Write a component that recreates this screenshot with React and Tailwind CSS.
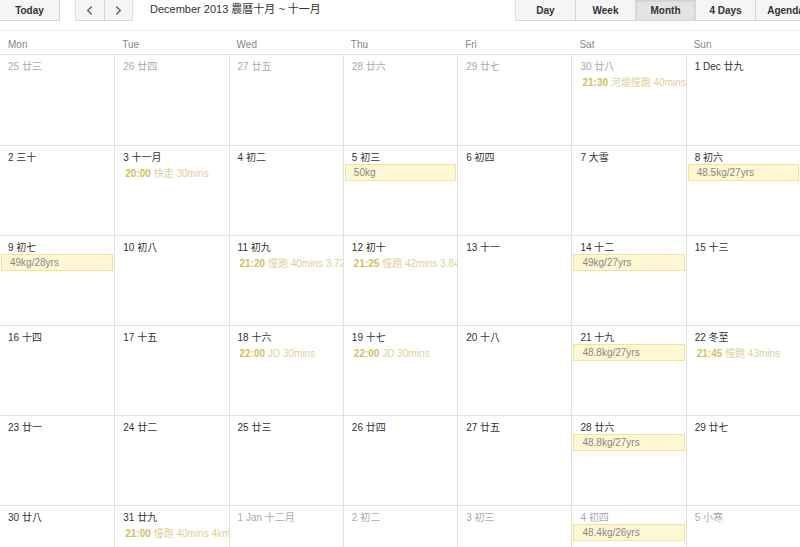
import { ChevronLeft, ChevronRight } from 'lucide-react';

const FONT = { fontFamily: '"Liberation Sans", Arial, "Noto Sans CJK TC", sans-serif' };

const DAYS = ['Mon', 'Tue', 'Wed', 'Thu', 'Fri', 'Sat', 'Sun'];

// o = other month, ev = timed event, box = all-day note
const WEEKS = [
  [
    { d: '25 廿三', o: true },
    { d: '26 廿四', o: true },
    { d: '27 廿五', o: true },
    { d: '28 廿六', o: true },
    { d: '29 廿七', o: true },
    { d: '30 廿八', o: true, ev: ['21:30', '河堤慢跑 40mins'] },
    { d: '1 Dec 廿九' },
  ],
  [
    { d: '2 三十' },
    { d: '3 十一月', ev: ['20:00', '快走 30mins'] },
    { d: '4 初二' },
    { d: '5 初三', box: '50kg' },
    { d: '6 初四' },
    { d: '7 大雪' },
    { d: '8 初六', box: '48.5kg/27yrs' },
  ],
  [
    { d: '9 初七', box: '49kg/28yrs' },
    { d: '10 初八' },
    { d: '11 初九', ev: ['21:20', '慢跑 40mins 3.72km'] },
    { d: '12 初十', ev: ['21:25', '慢跑 42mins 3.84km'] },
    { d: '13 十一' },
    { d: '14 十二', box: '49kg/27yrs' },
    { d: '15 十三' },
  ],
  [
    { d: '16 十四' },
    { d: '17 十五' },
    { d: '18 十六', ev: ['22:00', 'JD 30mins'] },
    { d: '19 十七', ev: ['22:00', 'JD 30mins'] },
    { d: '20 十八' },
    { d: '21 十九', box: '48.8kg/27yrs' },
    { d: '22 冬至', ev: ['21:45', '慢跑 43mins'] },
  ],
  [
    { d: '23 廿一' },
    { d: '24 廿二' },
    { d: '25 廿三' },
    { d: '26 廿四' },
    { d: '27 廿五' },
    { d: '28 廿六', box: '48.8kg/27yrs' },
    { d: '29 廿七' },
  ],
  [
    { d: '30 廿八' },
    { d: '31 廿九', ev: ['21:00', '慢跑 40mins 4km'] },
    { d: '1 Jan 十二月', o: true },
    { d: '2 初二', o: true },
    { d: '3 初三', o: true },
    { d: '4 初四', o: true, box: '48.4kg/26yrs' },
    { d: '5 小寒', o: true },
  ],
];

const VIEWS = ['Day', 'Week', 'Month', '4 Days', 'Agenda'];

function Btn({ children, active, className = '' }) {
  return (
    <div
      className={`flex h-[21px] items-center justify-center border-b border-[#d6d6d6] text-[10px] font-bold text-[#333] ${
        active ? 'bg-[#e4e4e4] shadow-[inset_0_1px_3px_rgba(0,0,0,0.12)]' : 'bg-[#f5f5f5]'
      } ${className}`}
    >
      {children}
    </div>
  );
}

function Cell({ day, col }) {
  return (
    <div className={`min-w-0 overflow-hidden ${col > 0 ? 'border-l border-[#e2e2e2]' : ''}`}>
      <div className={`h-[18px] pl-2 pt-[6px] text-[10px] leading-[12px] ${day.o ? 'text-[#aaa]' : 'text-[#333]'}`}>
        {day.d}
      </div>
      {day.ev && (
        <div className="h-[18px] whitespace-nowrap pl-[10px] text-[10px] leading-[20px] text-[#dccf95]">
          <span className="font-bold text-[#d3c063]">{day.ev[0]}</span> {day.ev[1]}
        </div>
      )}
      {day.box && (
        <div className="mx-px h-[17px] whitespace-nowrap border border-[#f3e29a] bg-[#fff6d3] pl-[8px] text-[10px] leading-[15px] text-[#888]">
          {day.box}
        </div>
      )}
    </div>
  );
}

export default function App() {
  return (
    <div className="h-[547px] w-[800px] overflow-hidden bg-white" style={FONT}>
      <div className="flex h-[21px] items-center">
        <Btn className="w-[60px] shrink-0 border-r">Today</Btn>
        <div className="ml-[15px] flex w-[58px] shrink-0 border-x border-[#e0e0e0]">
          <Btn className="w-[29px] border-r">
            <ChevronLeft size={15} strokeWidth={1.8} className="text-[#555]" />
          </Btn>
          <Btn className="w-[28px]">
            <ChevronRight size={15} strokeWidth={1.8} className="text-[#555]" />
          </Btn>
        </div>
        <div className="ml-[17px] w-[365px] shrink-0 pb-[3px] text-[11px] text-[#333]">
          December 2013 農曆十月 ~ 十一月
        </div>
        <div className="flex shrink-0 border-l border-[#e0e0e0]">
          {VIEWS.map((v) => (
            <Btn key={v} active={v === 'Month'} className="w-[60px] shrink-0 border-r">
              {v}
            </Btn>
          ))}
        </div>
      </div>

      <div className="mt-[9px] grid h-[25px] grid-cols-7 border-y border-[#ececec] border-b-[#e2e2e2]">
        {DAYS.map((d) => (
          <div key={d} className="pl-2 pt-[2px] text-[10px] leading-[24px] text-[#888]">
            {d}
          </div>
        ))}
      </div>

      {WEEKS.map((week, i) => (
        <div
          key={i}
          className={`grid grid-cols-7 border-b border-[#e2e2e2] ${i === 0 ? 'h-[91px]' : 'h-[90px]'}`}
        >
          {week.map((day, j) => (
            <Cell key={j} day={day} col={j} />
          ))}
        </div>
      ))}
    </div>
  );
}
